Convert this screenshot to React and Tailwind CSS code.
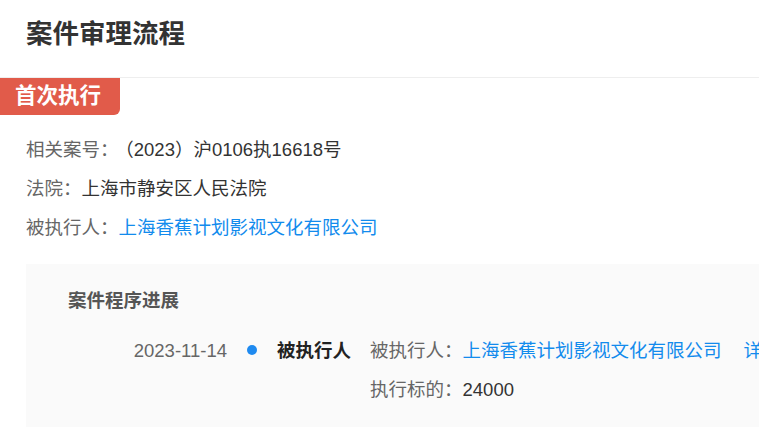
export default function App() {
  const font = { fontFamily: '"Liberation Sans", "Noto Sans CJK SC", sans-serif' };
  return (
    <div className="w-[759px] h-[427px] overflow-hidden bg-white" style={font}>
      <div className="w-[900px]">
        <div className="h-[78px] border-b border-[#eeeeee] pl-[26px] pt-[16px]">
          <h1 className="text-[26.5px] leading-[36px] font-bold text-[#333333]">案件审理流程</h1>
        </div>
        <div className="flex">
          <div className="h-[37px] bg-[#e15b4a] text-white font-bold text-[21.5px] leading-[37px] pl-[15px] pr-[19px] rounded-br-[6px]">
            首次执行
          </div>
        </div>
        <div className="pl-[26px] pt-[15px] text-[18.5px] leading-[39px] text-[#666666]">
          <div>相关案号：<span className="ml-[6px] text-[#333333]">（2023）沪0106执16618号</span></div>
          <div>法院：<span className="text-[#333333]">上海市静安区人民法院</span></div>
          <div>被执行人：<span className="text-[#128bed]">上海香蕉计划影视文化有限公司</span></div>
        </div>
        <div className="ml-[26px] mt-[17px] bg-[#fafafa] pl-[42px] pt-[25px] pb-[30px]">
          <div className="text-[18.5px] leading-[24px] font-bold text-[#555555]">案件程序进展</div>
          <div className="flex mt-[18px] text-[18.5px] leading-[39px]">
            <div className="w-[159px] text-right text-[#666666]">2023-11-14</div>
            <div className="w-[50px] flex justify-center pt-[14px]">
              <div className="w-[10px] h-[10px] rounded-full bg-[#1e8af0]"></div>
            </div>
            <div className="w-[93px] font-bold text-[#222222]">被执行人</div>
            <div className="text-[#666666]">
              <div className="flex">
                <span>被执行人：</span>
                <span className="text-[#128bed]">上海香蕉计划影视文化有限公司</span>
                <span className="ml-[22px] text-[#128bed]">详情</span>
              </div>
              <div>执行标的：<span className="text-[#333333]">24000</span></div>
            </div>
          </div>
        </div>
      </div>
    </div>
  );
}
